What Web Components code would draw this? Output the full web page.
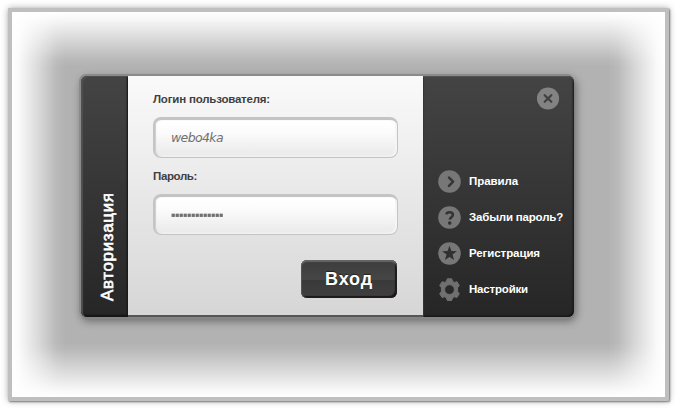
<!DOCTYPE html>
<html lang="ru">
<head>
<meta charset="utf-8">
<title>Авторизация</title>
<style>
html,body{margin:0;width:678px;height:410px;background:#fff;overflow:hidden}
body{font-family:"Liberation Sans",Arial,sans-serif}
</style>
</head>
<body>
<login-stage>
  <login-panel heading="Авторизация">
    <login-field label="Логин пользователя:" label-width="117" kind="text" value="webo4ka"></login-field>
    <login-field label="Пароль:" label-width="44" kind="password" value="▪▪▪▪▪▪▪▪▪▪▪▪▪"></login-field>
    <login-button>Вход</login-button>
    <round-icon slot="close" name="close"></round-icon>
    <side-link slot="links" icon="arrow" width="49" label="Правила"></side-link>
    <side-link slot="links" icon="help" width="94" label="Забыли пароль?"></side-link>
    <side-link slot="links" icon="star" width="71" label="Регистрация"></side-link>
    <side-link slot="links" icon="gear" width="59" label="Настройки"></side-link>
  </login-panel>
</login-stage>
<script>
class Base extends HTMLElement{
  connectedCallback(){
    if(this.shadowRoot)return;
    this.attachShadow({mode:'open'}).innerHTML=this.view();
  }
  at(n){return this.getAttribute(n)||''}
}

/* A line of text whose letter spacing is adjusted to a given width. */
customElements.define('fit-text',class extends Base{
  view(){return `<style>:host{display:inline-block;white-space:nowrap}span{display:inline-block;white-space:nowrap}</style><span>${this.at('text')}</span>`}
  connectedCallback(){
    super.connectedCallback();
    const s=this.shadowRoot.querySelector('span'),n=this.at('text').length;
    s.style.letterSpacing=((+this.at('width')-s.getBoundingClientRect().width)/n)+'px';
  }
});

customElements.define('round-icon',class extends Base{
  view(){
    const disc='<circle cx="11.5" cy="11.5" r="11.3" fill="#777"/>';
    const art={
      close:'<circle cx="11" cy="11.5" r="11.1" fill="#838383"/><path d="M7.7 8.2l6.6 6.6M14.3 8.2l-6.6 6.6" stroke="#404040" stroke-width="2.2" stroke-linecap="round"/>',
      arrow:disc+'<path d="M11 7.6l4.1 4.1-4.1 4.1" fill="none" stroke="#363636" stroke-width="2.5" stroke-linecap="round" stroke-linejoin="round"/>',
      help:disc+'<path d="M8.4 8.4C8.7 6.7 10 6.2 11.6 6.2c2 0 3.3 1 3.3 2.6 0 2.4-3 2.3-3.1 4.8" fill="none" stroke="#333" stroke-width="2.5"/><circle cx="11.7" cy="17.1" r="1.8" fill="#333"/>',
      star:disc+'<path d="M11.5 3.8l1.9 5.3 5.5.1-4.4 3.4 1.6 5.5-4.6-3.2-4.6 3.2 1.6-5.5L4.1 9.2l5.5-.1z" fill="#303030"/>',
      gear:'<path fill="#707070" stroke="#707070" stroke-width="1" stroke-linejoin="round" fill-rule="evenodd" d="M8.3 3.5L9.3.8h4.4l1 2.7 1.5.9 2.8-.6 2.3 3.7-1.7 2.2v3.8l1.7 2.2-2.3 3.7-2.8-.6-1.5.9-1 2.7H9.3l-1-2.7-1.5-.9-2.8.6-2.3-3.7 1.7-2.2V9.7L1.7 7.5 4 3.8l2.8.6zM11.5 6.7a4.9 4.9 0 1 0 0 9.8 4.9 4.9 0 0 0 0-9.8z"/>'
    };
    return `<style>:host{display:block;width:23px;height:23px;flex:none}svg{display:block}</style><svg width="23" height="23" viewBox="0 0 23 23">${art[this.at('name')]}</svg>`;
  }
});

customElements.define('side-link',class extends Base{
  view(){return `<style>:host{display:flex;align-items:center;height:36px;gap:8px;color:#fff;font-weight:bold;font-size:11.5px;line-height:14px}</style>
  <round-icon name="${this.at('icon')}"></round-icon><fit-text text="${this.at('label')}" width="${this.at('width')}"></fit-text>`}
});

customElements.define('login-field',class extends Base{
  view(){return `<style>
  :host{display:block;height:77px}
  label{display:block;height:12px;padding-bottom:12px;font:bold 11.5px/12px "Liberation Sans",sans-serif;color:#404040}
  .box{box-sizing:border-box;width:245px;height:41px;border:solid #c4c4c4;border-width:3px 1px 1px 2px;border-radius:8px;
    background:linear-gradient(#fff 5%,#fbfbfb 35%,#ebebeb 92%,#f1f1f1);box-shadow:inset 1px 0 1px #ccc,inset -2px -1px 1px #f5f5f5;display:flex;align-items:center;padding:0 0 2px 16px;color:#707070}
  .text{font:italic 200 12.5px/16px "DejaVu Sans","DejaVu Sans Light",sans-serif}
  .password{font:6.5px/10px "DejaVu Sans",sans-serif;will-change:transform}
  </style><label><fit-text text="${this.at('label')}" width="${this.at('label-width')}"></fit-text></label>
  <div class="box"><fit-text class="${this.at('kind')}" text="${this.at('value')}" width="52"></fit-text></div>`}
});

customElements.define('login-button',class extends Base{
  view(){return `<style>
  :host{display:flex;box-sizing:border-box;align-items:center;justify-content:center;align-self:flex-end;width:96px;height:38px;margin-top:13px;border-radius:6px;
    background:linear-gradient(#3c3c3c,#464646 51%,#393939 53%,#404040);box-shadow:inset 0 2px 1px #666,inset 1px 0 1px #555,inset -2px -2px 1px #1c1718;color:#fff;font:bold 18px/22px "Liberation Sans",sans-serif;text-shadow:0 -1px 1px #222}
  </style><fit-text text="${this.textContent.trim()}" width="48"></fit-text>`}
});

customElements.define('login-panel',class extends Base{
  view(){return `<style>
  :host{display:flex;width:493px;height:241px;border-radius:6px;box-shadow:-1px -1px 0 1px #8b8b8b,0 2px 1px #858585,1px 3px 8px 1px rgba(0,0,0,.42);}
  .title,.side{background:linear-gradient(#444,#262626)}
  .title{width:47px;border-radius:6px 0 0 6px;box-shadow:inset 2px 1px 1px #505050,inset -1px 0 2px #181818,inset 0 -2px 2px #141414;display:flex;align-items:flex-end;justify-content:center}
  .form{box-sizing:border-box;width:295px;padding:17px 26px 0 25px;display:flex;flex-direction:column;background:linear-gradient(#fafafa,#d6d6d6);border-bottom:2px solid #555}
  .side{box-sizing:border-box;width:151px;border-radius:0 6px 6px 0;box-shadow:inset 0 1px 1px #555,inset 1px 0 1px #333,inset -1px -1px 2px #111;display:flex;flex-direction:column;justify-content:space-between;padding:11px 14px 10px 15px}
  .close{align-self:flex-end}
  </style>
  <div class="title"><vertical-title text="${this.at('heading')}"></vertical-title></div>
  <div class="form"><slot></slot></div>
  <div class="side"><div class="close"><slot name="close"></slot></div><div><slot name="links"></slot></div></div>`}
});

customElements.define('vertical-title',class extends Base{
  view(){return `<style>:host{display:block;width:28px;height:116px;margin:0 0 12px 6px}svg{display:block}
  text{font:17px "Liberation Sans",sans-serif;fill:#fff;stroke:#fff;stroke-width:.6px}</style>
  <svg width="28" height="116"><text transform="translate(19 112) rotate(-90)" textLength="108" lengthAdjust="spacing">${this.at('text')}</text></svg>`}
});

customElements.define('login-stage',class extends Base{
  view(){return `<style>
  :host{display:block;box-sizing:border-box;width:678px;height:410px;padding:8px 9px 9px 8px}
  .frame{box-sizing:border-box;width:661px;height:393px;border:4px solid #bfbfbf;border-radius:1px;padding:64px 0 0 69px;
    background:
      linear-gradient(#fff,rgba(255,255,255,.92) 6px,rgba(255,255,255,.5) 27px,rgba(255,255,255,.08) 48px,transparent 55px,transparent calc(100% - 55px),rgba(255,255,255,.08) calc(100% - 48px),rgba(255,255,255,.5) calc(100% - 27px),rgba(255,255,255,.92) calc(100% - 6px),#fff),
      linear-gradient(90deg,#fff,rgba(255,255,255,.93) 7px,rgba(255,255,255,.5) 27px,rgba(255,255,255,.1) 44px,transparent 54px,transparent calc(100% - 57px),rgba(255,255,255,.1) calc(100% - 47px),rgba(255,255,255,.5) calc(100% - 29px),rgba(255,255,255,.93) calc(100% - 8px),#fff),
      #b2b2b2;
    background-origin:padding-box;
    box-shadow:0 0 7px rgba(0,0,0,.32),1px 1px 2px rgba(0,0,0,.45)}
  </style><div class="frame"><slot></slot></div>`}
});
</script>
</body>
</html>
